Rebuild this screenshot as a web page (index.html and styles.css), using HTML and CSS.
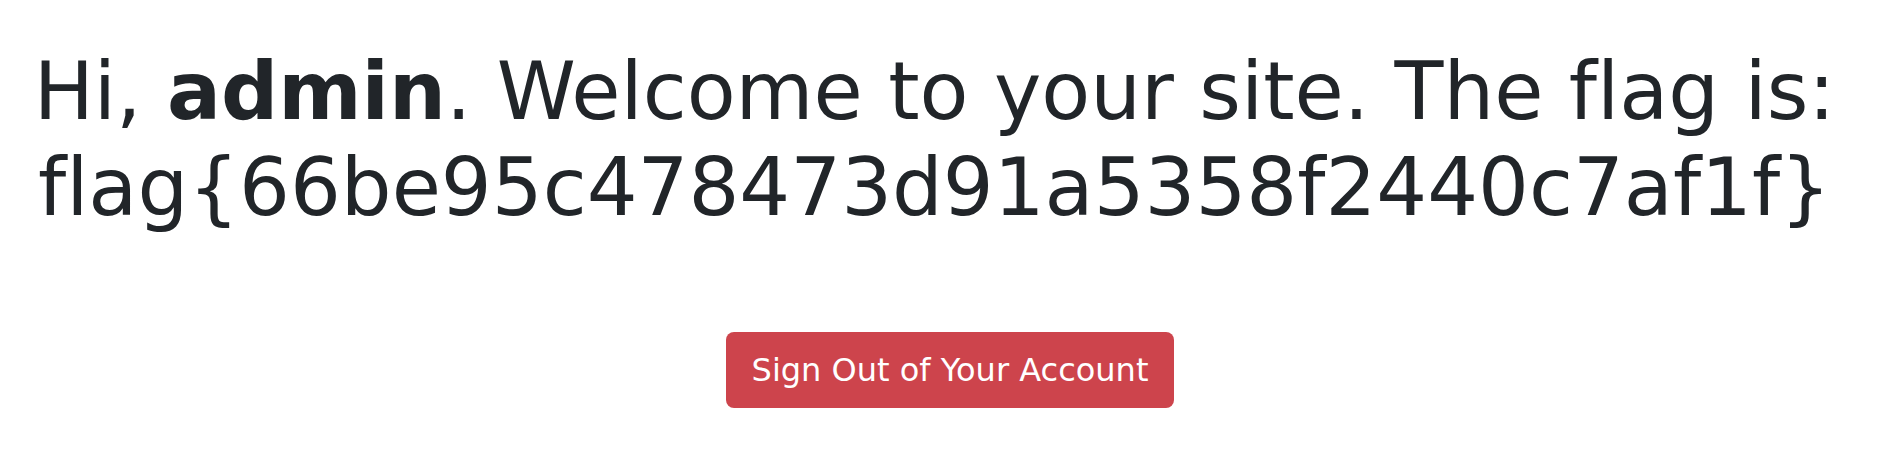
FILE: index.html
```html
<!DOCTYPE html>
<html>
<head>
<meta charset="utf-8">
<link rel="stylesheet" href="styles.css">
</head>
<body>
<main class="page">
  <h1 class="welcome">Hi, <strong>admin</strong>. Welcome to your site. The flag is: flag{66be95c478473d91a5358f2440c7af1f}</h1>
  <div class="actions">
    <a class="btn-signout" href="#">Sign Out of Your Account</a>
  </div>
</main>
</body>
</html>
```
FILE: styles.css
```css
html, body {
  margin: 0;
  padding: 0;
  background: #fff;
}
body {
  font-family: "DejaVu Sans", sans-serif;
  color: #212529;
  font-variant-ligatures: none;
}
.page {
  display: flex;
  flex-direction: column;
  align-items: center;
  padding-top: 44px;
}
.welcome {
  margin: 0;
  padding-right: 9px;
  font-size: 80px;
  line-height: 96px;
  font-weight: 400;
  text-align: center;
}
.welcome strong {
  font-weight: 700;
}
.actions {
  margin-top: 96px;
  padding-left: 22px;
  display: flex;
  justify-content: center;
}
.btn-signout {
  display: inline-block;
  background: #cd444c;
  color: #fff;
  text-decoration: none;
  font-size: 32px;
  line-height: 50px;
  padding: 13px 26px;
  border-radius: 8px;
}
```
